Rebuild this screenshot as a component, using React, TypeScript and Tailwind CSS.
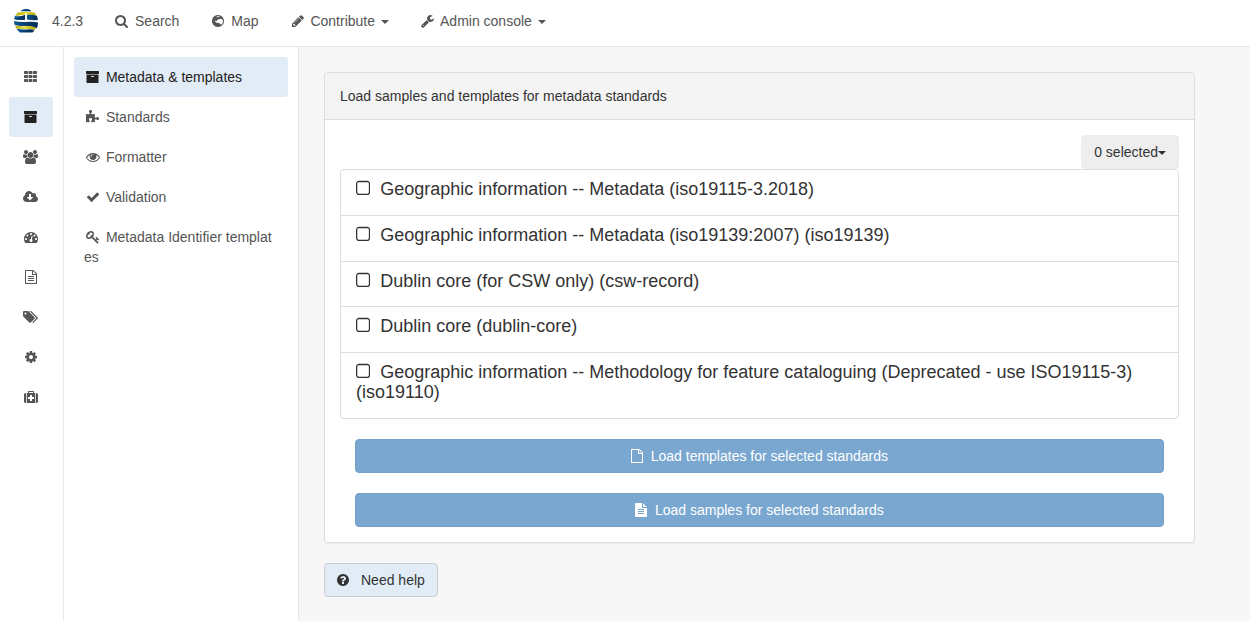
import type { ReactNode } from "react";

// Glyph outlines on a 1792-unit em, y axis pointing up, baseline at 0.
const glyphs = {
  search: [1664, "M1152 704q0 185 -131.5 316.5t-316.5 131.5t-316.5 -131.5t-131.5 -316.5t131.5 -316.5t316.5 -131.5t316.5 131.5t131.5 316.5zM1664 -128q0 -52 -38 -90t-90 -38q-54 0 -90 38l-343 342q-179 -124 -399 -124q-143 0 -273.5 55.5t-225 150t-150 225t-55.5 273.5t55.5 273.5t150 225t225 150t273.5 55.5t273.5 -55.5t225 -150t150 -225t55.5 -273.5q0 -220 -124 -399l343 -343q37 -37 37 -90z"],
  pencil: [1536, "M363 0l91 91l-235 235l-91 -91v-107h128v-128h107zM886 928q0 22 -22 22q-10 0 -17 -7l-542 -542q-7 -7 -7 -17q0 -22 22 -22q10 0 17 7l542 542q7 7 7 17zM832 1120l416 -416l-832 -832h-416v416zM1515 1024q0 -53 -37 -90l-166 -166l-416 416l166 165q36 38 90 38q53 0 91 -38l235 -234q37 -39 37 -91z"],
  wrench: [1664, "M384 64q0 26 -19 45t-45 19t-45 -19t-19 -45t19 -45t45 -19t45 19t19 45zM1028 484l-682 -682q-37 -37 -90 -37q-52 0 -91 37l-106 108q-38 36 -38 90q0 53 38 91l681 681q39 -98 114.5 -173.5t173.5 -114.5zM1662 919q0 -39 -23 -106q-47 -134 -164.5 -217.5t-258.5 -83.5q-185 0 -316.5 131.5t-131.5 316.5t131.5 316.5t316.5 131.5q58 0 121.5 -16.5t107.5 -46.5q16 -11 16 -28t-16 -28l-293 -169v-224l193 -107q5 3 79 48.5t135.5 81t70.5 35.5q15 0 23.5 -10t8.5 -25z"],
  th: [1664, "M512 288v-192q0 -40 -28 -68t-68 -28h-320q-40 0 -68 28t-28 68v192q0 40 28 68t68 28h320q40 0 68 -28t28 -68zM512 800v-192q0 -40 -28 -68t-68 -28h-320q-40 0 -68 28t-28 68v192q0 40 28 68t68 28h320q40 0 68 -28t28 -68zM1088 288v-192q0 -40 -28 -68t-68 -28h-320q-40 0 -68 28t-28 68v192q0 40 28 68t68 28h320q40 0 68 -28t28 -68zM512 1312v-192q0 -40 -28 -68t-68 -28h-320q-40 0 -68 28t-28 68v192q0 40 28 68t68 28h320q40 0 68 -28t28 -68zM1088 800v-192q0 -40 -28 -68t-68 -28h-320q-40 0 -68 28t-28 68v192q0 40 28 68t68 28h320q40 0 68 -28t28 -68zM1664 288v-192q0 -40 -28 -68t-68 -28h-320q-40 0 -68 28t-28 68v192q0 40 28 68t68 28h320q40 0 68 -28t28 -68zM1088 1312v-192q0 -40 -28 -68t-68 -28h-320q-40 0 -68 28t-28 68v192q0 40 28 68t68 28h320q40 0 68 -28t28 -68zM1664 800v-192q0 -40 -28 -68t-68 -28h-320q-40 0 -68 28t-28 68v192q0 40 28 68t68 28h320q40 0 68 -28t28 -68zM1664 1312v-192q0 -40 -28 -68t-68 -28h-320q-40 0 -68 28t-28 68v192q0 40 28 68t68 28h320q40 0 68 -28t28 -68z"],
  archive: [1664, "M1024 704q0 26 -19 45t-45 19h-256q-26 0 -45 -19t-19 -45t19 -45t45 -19h256q26 0 45 19t19 45zM1600 896v-960q0 -26 -19 -45t-45 -19h-1408q-26 0 -45 19t-19 45v960q0 26 19 45t45 19h1408q26 0 45 -19t19 -45zM1664 1344v-256q0 -26 -19 -45t-45 -19h-1536q-26 0 -45 19t-19 45v256q0 26 19 45t45 19h1536q26 0 45 -19t19 -45z"],
  users: [1920, "M593 640q-162 -5 -265 -128h-134q-82 0 -138 40.5t-56 118.5q0 353 124 353q6 0 43.5 -21t97.5 -42.5t119 -21.5q67 0 133 23q-5 -37 -5 -66q0 -159 81 -256zM1664 3q0 -120 -73 -189.5t-194 -69.5h-874q-121 0 -194 69.5t-73 189.5q0 53 3.5 103.5t14 109t26.5 108.5t43 97.5t62 81t85.5 53.5t111.5 20q10 0 43 -21.5t73 -48t107 -48t135 -21.5t135 21.5t107 48t73 48t43 21.5q61 0 111.5 -20t85.5 -53.5t62 -81t43 -97.5t26.5 -108.5t14 -109t3.5 -103.5zM640 1280q0 -106 -75 -181t-181 -75t-181 75t-75 181t75 181t181 75t181 -75t75 -181zM1344 896q0 -159 -112.5 -271.5t-271.5 -112.5t-271.5 112.5t-112.5 271.5t112.5 271.5t271.5 112.5t271.5 -112.5t112.5 -271.5zM1920 671q0 -78 -56 -118.5t-138 -40.5h-134q-103 123 -265 128q90 97 90 256q0 29 -5 66q66 -23 133 -23q59 0 119 21.5t97.5 42.5t43.5 21q124 0 124 -353zM1792 1280q0 -106 -75 -181t-181 -75t-181 75t-75 181t75 181t181 75t181 -75t75 -181z"],
  cloud: [1920, "M1280 608q0 14 -9 23t-23 9h-224v352q0 13 -9.5 22.5t-22.5 9.5h-192q-13 0 -22.5 -9.5t-9.5 -22.5v-352h-224q-13 0 -22.5 -9.5t-9.5 -22.5q0 -14 9 -23l352 -352q9 -9 23 -9t23 9l351 351q10 12 10 24zM1920 384q0 -159 -112.5 -271.5t-271.5 -112.5h-1088q-185 0 -316.5 131.5t-131.5 316.5q0 130 70 240t188 165q-2 30 -2 43q0 212 150 362t362 150q156 0 285.5 -87t188.5 -231q71 62 166 62q106 0 181 -75t75 -181q0 -76 -41 -138q130 -31 213.5 -135.5t83.5 -238.5z"],
  gauge: [1792, "M384 384q0 53 -37.5 90.5t-90.5 37.5t-90.5 -37.5t-37.5 -90.5t37.5 -90.5t90.5 -37.5t90.5 37.5t37.5 90.5zM576 832q0 53 -37.5 90.5t-90.5 37.5t-90.5 -37.5t-37.5 -90.5t37.5 -90.5t90.5 -37.5t90.5 37.5t37.5 90.5zM1004 351l101 382q6 26 -7.5 48.5t-38.5 29.5t-48 -6.5t-30 -39.5l-101 -382q-60 -5 -107 -43.5t-63 -98.5q-20 -77 20 -146t117 -89t146 20t89 117q16 60 -6 117t-72 91zM1664 384q0 53 -37.5 90.5t-90.5 37.5t-90.5 -37.5t-37.5 -90.5t37.5 -90.5t90.5 -37.5t90.5 37.5t37.5 90.5zM1024 1024q0 53 -37.5 90.5t-90.5 37.5t-90.5 -37.5t-37.5 -90.5t37.5 -90.5t90.5 -37.5t90.5 37.5t37.5 90.5zM1472 832q0 53 -37.5 90.5t-90.5 37.5t-90.5 -37.5t-37.5 -90.5t37.5 -90.5t90.5 -37.5t90.5 37.5t37.5 90.5zM1792 384q0 -261 -141 -483q-19 -29 -54 -29h-1402q-35 0 -54 29q-141 221 -141 483q0 182 71 348t191 286t286 191t348 71t348 -71t286 -191t191 -286t71 -348z"],
  fileTextO: [1536, "M1468 1156q28 -28 48 -76t20 -88v-1152q0 -40 -28 -68t-68 -28h-1344q-40 0 -68 28t-28 68v1600q0 40 28 68t68 28h896q40 0 88 -20t76 -48zM1024 1400v-376h376q-10 29 -22 41l-313 313q-12 12 -41 22zM1408 -128v1024h-416q-40 0 -68 28t-28 68v416h-768v-1536h1280zM384 736q0 14 9 23t23 9h704q14 0 23 -9t9 -23v-64q0 -14 -9 -23t-23 -9h-704q-14 0 -23 9t-9 23v64zM1120 512q14 0 23 -9t9 -23v-64q0 -14 -9 -23t-23 -9h-704q-14 0 -23 9t-9 23v64q0 14 9 23t23 9h704zM1120 256q14 0 23 -9t9 -23v-64q0 -14 -9 -23t-23 -9h-704q-14 0 -23 9t-9 23v64q0 14 9 23t23 9h704z"],
  fileO: [1536, "M1468 1156q28 -28 48 -76t20 -88v-1152q0 -40 -28 -68t-68 -28h-1344q-40 0 -68 28t-28 68v1600q0 40 28 68t68 28h896q40 0 88 -20t76 -48zM1024 1400v-376h376q-10 29 -22 41l-313 313q-12 12 -41 22zM1408 -128v1024h-416q-40 0 -68 28t-28 68v416h-768v-1536h1280z"],
  fileText: [1536, "M1468 1060q14 -14 28 -36h-472v472q22 -14 36 -28zM992 896h544v-1056q0 -40 -28 -68t-68 -28h-1344q-40 0 -68 28t-28 68v1600q0 40 28 68t68 28h800v-544q0 -40 28 -68t68 -28zM1152 160v64q0 14 -9 23t-23 9h-704q-14 0 -23 -9t-9 -23v-64q0 -14 9 -23t23 -9h704q14 0 23 9t9 23zM1152 416v64q0 14 -9 23t-23 9h-704q-14 0 -23 -9t-9 -23v-64q0 -14 9 -23t23 -9h704q14 0 23 9t9 23zM1152 672v64q0 14 -9 23t-23 9h-704q-14 0 -23 -9t-9 -23v-64q0 -14 9 -23t23 -9h704q14 0 23 9t9 23z"],
  tags: [1920, "M448 1088q0 53 -37.5 90.5t-90.5 37.5t-90.5 -37.5t-37.5 -90.5t37.5 -90.5t90.5 -37.5t90.5 37.5t37.5 90.5zM1515 512q0 -53 -37 -90l-491 -492q-39 -37 -91 -37q-53 0 -90 37l-715 716q-38 37 -64.5 101t-26.5 117v416q0 52 38 90t90 38h416q53 0 117 -26.5t102 -64.5l715 -714q37 -39 37 -91zM1899 512q0 -53 -37 -90l-491 -492q-39 -37 -91 -37q-36 0 -59 14t-53 45l470 470q37 37 37 90q0 52 -37 91l-715 714q-38 38 -102 64.5t-117 26.5h224q53 0 117 -26.5t102 -64.5l715 -714q37 -39 37 -91z"],
  cog: [1536, "M1024 640q0 106 -75 181t-181 75t-181 -75t-75 -181t75 -181t181 -75t181 75t75 181zM1536 749v-222q0 -12 -8 -23t-20 -13l-185 -28q-19 -54 -39 -91q35 -50 107 -138q10 -12 10 -25t-9 -23q-27 -37 -99 -108t-94 -71q-12 0 -26 9l-138 108q-44 -23 -91 -38q-16 -136 -29 -186q-7 -28 -36 -28h-222q-14 0 -24.5 8.5t-11.5 21.5l-28 184q-49 16 -90 37l-141 -107q-10 -9 -25 -9q-14 0 -25 11q-126 114 -165 168q-7 10 -7 23q0 12 8 23q15 21 51 66.5t54 70.5q-27 50 -41 99l-183 27q-13 2 -21 12.5t-8 23.5v222q0 12 8 23t19 13l186 28q14 46 39 92q-40 57 -107 138q-10 12 -10 24q0 10 9 23q26 36 98.5 107.5t94.5 71.5q13 0 26 -10l138 -107q44 23 91 38q16 136 29 186q7 28 36 28h222q14 0 24.5 -8.5t11.5 -21.5l28 -184q49 -16 90 -37l142 107q9 9 24 9q13 0 25 -10q129 -119 165 -170q7 -8 7 -22q0 -12 -8 -23q-15 -21 -51 -66.5t-54 -70.5q26 -50 41 -98l183 -28q13 -2 21 -12.5t8 -23.5z"],
  medkit: [1792, "M1280 416v192q0 14 -9 23t-23 9h-224v224q0 14 -9 23t-23 9h-192q-14 0 -23 -9t-9 -23v-224h-224q-14 0 -23 -9t-9 -23v-192q0 -14 9 -23t23 -9h224v-224q0 -14 9 -23t23 -9h192q14 0 23 9t9 23v224h224q14 0 23 9t9 23zM640 1152h512v128h-512v-128zM256 1152v-1280h-32q-92 0 -158 66t-66 158v832q0 92 66 158t158 66h32zM1440 1152v-1280h-1088v1280h160v160q0 40 28 68t68 28h576q40 0 68 -28t28 -68v-160h160zM1792 928v-832q0 -92 -66 -158t-158 -66h-32v1280h32q92 0 158 -66t66 -158z"],
  puzzle: [1664, "M1664 438q0 -81 -44.5 -135t-123.5 -54q-41 0 -77.5 17.5t-59 38t-56.5 38t-71 17.5q-110 0 -110 -124q0 -39 16 -115t15 -115v-5q-22 0 -33 -1q-34 -3 -97.5 -11.5t-115.5 -13.5t-98 -5q-61 0 -103 26.5t-42 83.5q0 37 17.5 71t38 56.5t38 59t17.5 77.5q0 79 -54 123.5t-135 44.5q-84 0 -143 -45.5t-59 -127.5q0 -43 15 -83t33.5 -64.5t33.5 -53t15 -50.5q0 -45 -46 -89q-37 -35 -117 -35q-95 0 -245 24q-9 2 -27.5 4t-27.5 4l-13 2q-1 0 -3 1q-2 0 -2 1v1024q2 -1 17.5 -3.5t34 -5t21.5 -3.5q150 -24 245 -24q80 0 117 35q46 44 46 89q0 22 -15 50.5t-33.5 53t-33.5 64.5t-15 83q0 82 59 127.5t144 45.5q80 0 134 -44.5t54 -123.5q0 -41 -17.5 -77.5t-38 -59t-38 -56.5t-17.5 -71q0 -57 42 -83.5t103 -26.5q64 0 180 15t163 17v-2q-1 -2 -3.5 -17.5t-5 -34t-3.5 -21.5q-24 -150 -24 -245q0 -80 35 -117q44 -46 89 -46q22 0 50.5 15t53 33.5t64.5 33.5t83 15q82 0 127.5 -59t45.5 -143z"],
  eye: [1792, "M1664 576q-152 236 -381 353q61 -104 61 -225q0 -185 -131.5 -316.5t-316.5 -131.5t-316.5 131.5t-131.5 316.5q0 121 61 225q-229 -117 -381 -353q133 -205 333.5 -326.5t434.5 -121.5t434.5 121.5t333.5 326.5zM944 960q0 20 -14 34t-34 14q-125 0 -214.5 -89.5t-89.5 -214.5q0 -20 14 -34t34 -14t34 14t14 34q0 86 61 147t147 61q20 0 34 14t14 34zM1792 576q0 -34 -20 -69q-140 -230 -376.5 -368.5t-499.5 -138.5t-499.5 139t-376.5 368q-20 35 -20 69t20 69q140 229 376.5 368t499.5 139t499.5 -139t376.5 -368q20 -35 20 -69z"],
  check: [1792, "M1671 970q0 -40 -28 -68l-724 -724l-136 -136q-28 -28 -68 -28t-68 28l-136 136l-362 362q-28 28 -28 68t28 68l136 136q28 28 68 28t68 -28l294 -295l656 657q28 28 68 28t68 -28l136 -136q28 -28 28 -68z"],
  key: [1792, "M832 1024q0 80 -56 136t-136 56t-136 -56t-56 -136q0 -42 19 -83q-41 19 -83 19q-80 0 -136 -56t-56 -136t56 -136t136 -56t136 56t56 136q0 42 -19 83q41 -19 83 -19q80 0 136 56t56 136zM1683 320q0 -17 -49 -66t-66 -49q-9 0 -28.5 16t-36.5 33t-38.5 40t-24.5 26l-96 -96l220 -220q28 -28 28 -68q0 -42 -39 -81t-81 -39q-40 0 -68 28l-671 671q-176 -131 -365 -131q-163 0 -265.5 102.5t-102.5 265.5q0 160 95 313t248 248t313 95q163 0 265.5 -102.5t102.5 -265.5q0 -189 -131 -365l355 -355l96 96q-3 3 -26 24.5t-40 38.5t-33 36.5t-16 28.5q0 17 49 66t66 49q13 0 23 -10q6 -6 46 -44.5t82 -79.5t86.5 -86t73 -78t28.5 -41z"],
  square: [1408, "M1120 1280h-832q-66 0 -113 -47t-47 -113v-832q0 -66 47 -113t113 -47h832q66 0 113 47t47 113v832q0 66 -47 113t-113 47zM1408 1120v-832q0 -119 -84.5 -203.5t-203.5 -84.5h-832q-119 0 -203.5 84.5t-84.5 203.5v832q0 119 84.5 203.5t203.5 84.5h832q119 0 203.5 -84.5t84.5 -203.5z"],
  question: [1536, "M896 160v192q0 14 -9 23t-23 9h-192q-14 0 -23 -9t-9 -23v-192q0 -14 9 -23t23 -9h192q14 0 23 9t9 23zM1152 832q0 88 -55.5 163t-138.5 116t-170 41q-243 0 -371 -213q-15 -24 8 -42l132 -100q7 -6 19 -6q16 0 25 12q53 68 86 92q34 24 86 24q48 0 85.5 -26t37.5 -59q0 -38 -20 -61t-68 -45q-63 -28 -115.5 -86.5t-52.5 -125.5v-36q0 -14 9 -23t23 -9h192q14 0 23 9t9 23q0 19 21.5 49.5t54.5 49.5q32 18 49 28.5t46 35t44.5 48t28 60.5t12.5 81zM1536 640q0 -209 -103 -385.5t-279.5 -279.5t-385.5 -103t-385.5 103t-279.5 279.5t-103 385.5t103 385.5t279.5 279.5t385.5 103t385.5 -103t279.5 -279.5t103 -385.5z"],
  globe: [1536, "M768 1408q209 0 385.5 -103t279.5 -279.5t103 -385.5t-103 -385.5t-279.5 -279.5t-385.5 -103t-385.5 103t-279.5 279.5t-103 385.5t103 385.5t279.5 279.5t385.5 103zM1030 905L960 880L900 900L870 850L800 830L740 790L690 800L640 740L650 690L590 640L500 650L440 700L390 690L360 610L400 560L470 570L480 510L540 480L560 410L620 380L700 400L760 440L850 400L930 370L970 300L1060 260L1120 200L1228 199Q1390 380 1408 620L1380 760L1310 850L1240 830L1190 900L1120 940zM560 1150L640 1120L700 1150L790 1120L850 1160L930 1120L980 1180L900 1240L780 1262L640 1245z"],
} satisfies Record<string, [number, string]>;

type IconName = keyof typeof glyphs;

// The box is aligned so that a glyph's baseline falls on a whole pixel.
function Glyph({ name, size = 14 }: { name: IconName; size?: number }) {
  const [advance, d] = glyphs[name];
  const ascent = Math.floor((size * 6) / 7);
  return (
    <svg
      className="-my-0.5 inline-block"
      style={{ verticalAlign: 2 - (size - ascent) }}
      width={(advance / 1792) * size}
      height={size}
      viewBox={`0 ${1536 - (ascent * 1792) / size} ${advance} 1792`}
      fill="currentColor"
      fillRule="evenodd"
      aria-hidden="true"
    >
      <path transform="translate(0 1536) scale(1 -1)" d={d} />
    </svg>
  );
}

// Centres a glyph in an 18px slot, snapped down to a whole pixel.
function FixedIcon({ name }: { name: IconName }) {
  const inset = Math.floor((18 - glyphs[name][0] / 128) / 2);
  return (
    <span className="inline-block w-[18px] text-left" style={{ paddingLeft: inset }}>
      <Glyph name={name} />
    </span>
  );
}

function Caret({ className = "" }: { className?: string }) {
  return (
    <span
      className={`inline-block h-0 w-0 border-x-4 border-t-4 border-x-transparent border-t-current align-middle ${className}`}
    />
  );
}

function Logo() {
  return (
    <svg width="26" height="26" viewBox="0 0 26 26" aria-hidden="true">
      <defs>
        <linearGradient id="blue" x1="0" x2="1">
          <stop offset="0" stopColor="#0a5a94" />
          <stop offset="0.6" stopColor="#073a68" />
          <stop offset="1" stopColor="#062c52" />
        </linearGradient>
        <linearGradient id="gold" x1="0" x2="1">
          <stop offset="0" stopColor="#b0a914" />
          <stop offset="0.5" stopColor="#e6d91e" />
          <stop offset="1" stopColor="#a8a012" />
        </linearGradient>
      </defs>
      <path d="M8 2.4Q13 -.4 18 2.4V3.2H8z" fill="url(#blue)" />
      <path d="M4.6 4.4Q13 3 21.4 4.4L23.8 8Q19 6.6 13 6.8T2.2 8z" fill="url(#gold)" />
      <path d="M1.9 8Q7 9 12.2 6.8V11.8Q6 12.6 1.1 11.2z" fill="url(#blue)" />
      <path d="M13.8 6.8Q19 6.2 24 8L25 12Q20 12.4 13.8 11.6z" fill="url(#blue)" />
      <path d="M12.2 4.8h1.6v7.4h-1.6z" fill="#fff" />
      <path d="M1 13Q6 14.4 13 14T25 14.4Q25 17.6 23.8 20.2Q19 17.8 12 17.9T1.4 16.4z" fill="url(#blue)" />
      <path d="M1.8 17.6Q7 18.8 13 18.2T23 19.8L21.8 22Q16 20.6 11 20.8T3.2 20.2z" fill="url(#gold)" />
      <path d="M3.4 20.8Q9 22 14 21.4T21.4 22.4L19.4 24.6H6.8z" fill="url(#blue)" />
    </svg>
  );
}

function NavLink({ icon, caret, children }: { icon: IconName; caret?: boolean; children: ReactNode }) {
  return (
    <a className="px-[15px] whitespace-nowrap">
      <FixedIcon name={icon} /> {children}
      {caret && (
        <>
          {" "}
          <Caret className="ml-0.5" />
        </>
      )}
    </a>
  );
}

const railIcons: IconName[] = ["th", "archive", "users", "cloud", "gauge", "fileTextO", "tags", "cog", "medkit"];

const menu: [IconName, string][] = [
  ["archive", "Metadata & templates"],
  ["puzzle", "Standards"],
  ["eye", "Formatter"],
  ["check", "Validation"],
  ["key", "Metadata Identifier templates"],
];

const standards = [
  "Geographic information -- Metadata (iso19115-3.2018)",
  "Geographic information -- Metadata (iso19139:2007) (iso19139)",
  "Dublin core (for CSW only) (csw-record)",
  "Dublin core (dublin-core)",
  "Geographic information -- Methodology for feature cataloguing (Deprecated - use ISO19115-3) (iso19110)",
];

function LoadButton({ icon, children }: { icon: IconName; children: ReactNode }) {
  return (
    <button className="mx-[15px] mt-5 block h-[34px] rounded border border-[#759fc6] bg-[#7aa7d0] text-center leading-5 text-white">
      <Glyph name={icon} />
      &nbsp; {children}
    </button>
  );
}

export default function App() {
  return (
    <div className="flex h-[621px] flex-col overflow-hidden bg-[#f7f7f7] font-['Liberation_Sans',Arial,sans-serif] text-sm leading-5 text-[#333]">
      <header className="flex h-[47px] shrink-0 items-start border-b border-[#e7e7e7] bg-white pt-[11px] text-[#555]">
        <a className="-mt-[3px] flex pl-[13px]">
          <Logo />
        </a>
        <span className="pr-[15px] pl-[13px]">4.2.3</span>
        <NavLink icon="search">Search</NavLink>
        <NavLink icon="globe">Map</NavLink>
        <NavLink icon="pencil" caret>Contribute</NavLink>
        <NavLink icon="wrench" caret>Admin console</NavLink>
      </header>
      <div className="flex min-h-0 flex-1">
        <nav className="w-16 shrink-0 border-r border-[#e7e7e7] bg-white pt-2.5 pl-[9px]">
          {railIcons.map((name) => (
            <a
              key={name}
              className={`block h-10 w-11 rounded-[3px] py-2.5 text-center ${name === "archive" ? "bg-[#e2ecf6] text-[#222]" : "text-[#555]"}`}
            >
              <FixedIcon name={name} />
            </a>
          ))}
        </nav>
        <nav className="w-[235px] shrink-0 border-r border-[#e7e7e7] bg-white px-2.5 pt-2.5">
          {menu.map(([icon, label], i) => (
            <a
              key={label}
              className={`block rounded-[3px] p-2.5 break-all ${i === 0 ? "bg-[#e2ecf6] text-[#222]" : "text-[#555]"}`}
            >
              <FixedIcon name={icon} /> {label}
            </a>
          ))}
        </nav>
        <main className="flex-1 pt-[25px] pl-[25px]">
          <section className="flex h-[471px] w-[871px] flex-col rounded border border-[#ddd] bg-white shadow-[0_1px_1px_rgba(0,0,0,0.05)]">
            <h2 className="h-[47px] shrink-0 rounded-t-[3px] border-b border-[#ddd] bg-[#f4f4f4] px-[15px] py-[13px]">
              Load samples and templates for metadata standards
            </h2>
            <div className="flex flex-col p-[15px]">
              <button className="h-[34px] self-end rounded bg-[#eee] px-[13px]">
                0 selected
                <Caret />
              </button>
              <ul>
                {standards.map((name) => (
                  <li
                    key={name}
                    className="-mb-px border border-[#ddd] px-[15px] pt-2.5 pb-[15px] text-lg leading-[19.8px] first:rounded-t last:mb-0 last:rounded-b"
                  >
                    <Glyph name="square" size={18} />
                    &nbsp; {name}
                  </li>
                ))}
              </ul>
              <LoadButton icon="fileO">Load templates for selected standards</LoadButton>
              <LoadButton icon="fileText">Load samples for selected standards</LoadButton>
            </div>
          </section>
          <button className="mt-5 h-[34px] w-[114px] rounded border border-[#ccc] bg-[#e2ecf6] pl-[9px] text-left whitespace-nowrap">
            <FixedIcon name="question" />
            <span className="pl-[9px]">Need help</span>
          </button>
        </main>
      </div>
    </div>
  );
}
